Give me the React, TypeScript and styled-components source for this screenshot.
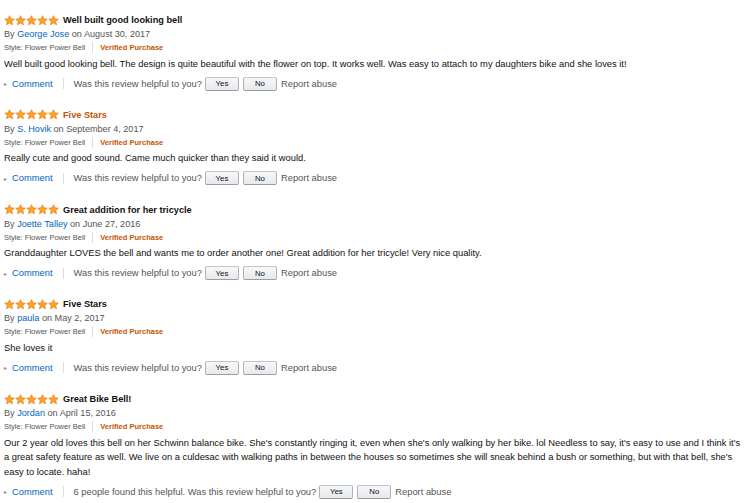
import React from "react";
import styled, { createGlobalStyle } from "styled-components";

const Global = createGlobalStyle`
  html, body { margin: 0; padding: 0; background: #fff; }
  body { font-family: "Liberation Sans", Arial, sans-serif; color: #111; }
`;

const Page = styled.div`
  padding: 13px 6px 0 4px;
  width: 750px;
  box-sizing: border-box;
`;

const Review = styled.div`
  display: flex;
  flex-direction: column;
  margin-bottom: 16.25px;
`;

const TitleRow = styled.div`
  display: flex;
  align-items: center;
  height: 14px;
  gap: 4px;
`;

const Stars = styled.div`
  display: flex;
  width: 55px;
`;

const Title = styled.span<{ $orange?: boolean }>`
  font-size: 9.2px;
  font-weight: bold;
  color: ${(p) => (p.$orange ? "#c45500" : "#111")};
`;

const ByLine = styled.div`
  font-size: 9.1px;
  line-height: 14px;
  height: 14px;
  color: #555;
`;

const Link = styled.span`
  color: #0066c0;
`;

const StyleLine = styled.div`
  display: flex;
  align-items: center;
  height: 13px;
  font-size: 7.5px;
  color: #555;
`;

const Sep = styled.span<{ $gap?: number }>`
  display: inline-block;
  width: 1px;
  height: 11px;
  background: #ddd;
  margin: 0 ${(p) => p.$gap ?? 7}px;
`;

const Verified = styled.span`
  color: #c45500;
  font-weight: bold;
`;

const Body = styled.div`
  margin-top: 2.5px;
  font-size: 9.35px;
  line-height: 14.5px;
  color: #111;
`;

const Actions = styled.div`
  margin-top: 4.5px;
  display: flex;
  align-items: center;
  height: 16px;
  font-size: 9.35px;
  color: #555;
`;

const Caret = styled.span`
  font-size: 6px;
  color: #888;
  margin-right: 5px;
`;

const Btn = styled.button`
  font-family: inherit;
  font-size: 7.8px;
  color: #111;
  height: 14px;
  width: 34px;
  padding: 0;
  margin-left: 3px;
  border: 1px solid #adb1b8;
  border-top-color: #c2c5ca;
  border-bottom-color: #9a9da2;
  border-radius: 2px;
  background: linear-gradient(#f7f8fa, #e7e9ec);
  & + & {
    margin-left: 4px;
  }
`;

const Report = styled.span`
  margin-left: 4px;
  color: #555;
`;

const Star = () => (
  <svg width="11" height="11" viewBox="0 0 24 24">
    <path
      d="M12 1.5l3.1 6.9 7.4.7-5.6 5 1.7 7.4L12 17.6l-6.6 3.9 1.7-7.4-5.6-5 7.4-.7z"
      fill="#ffa41c"
      stroke="#de7921"
      strokeWidth="1.4"
      strokeLinejoin="round"
    />
  </svg>
);

type R = {
  title: string;
  orange?: boolean;
  author: string;
  date: string;
  body: string;
  helpful?: string;
};

const reviews: R[] = [
  {
    title: "Well built good looking bell",
    author: "George Jose",
    date: "August 30, 2017",
    body: "Well built good looking bell. The design is quite beautiful with the flower on top. It works well. Was easy to attach to my daughters bike and she loves it!",
  },
  {
    title: "Five Stars",
    orange: true,
    author: "S. Hovik",
    date: "September 4, 2017",
    body: "Really cute and good sound. Came much quicker than they said it would.",
  },
  {
    title: "Great addition for her tricycle",
    author: "Joette Talley",
    date: "June 27, 2016",
    body: "Granddaughter LOVES the bell and wants me to order another one! Great addition for her tricycle! Very nice quality.",
  },
  {
    title: "Five Stars",
    author: "paula",
    date: "May 2, 2017",
    body: "She loves it",
  },
  {
    title: "Great Bike Bell!",
    author: "Jordan",
    date: "April 15, 2016",
    body: "Our 2 year old loves this bell on her Schwinn balance bike. She's constantly ringing it, even when she's only walking by her bike. lol Needless to say, it's easy to use and I think it's a great safety feature as well. We live on a culdesac with walking paths in between the houses so sometimes she will sneak behind a bush or something, but with that bell, she's easy to locate. haha!",
    helpful: "6 people found this helpful. ",
  },
];

export default function App() {
  return (
    <Page>
      <Global />
      {reviews.map((r, i) => (
        <Review key={i}>
          <TitleRow>
            <Stars>
              {[0, 1, 2, 3, 4].map((k) => (
                <Star key={k} />
              ))}
            </Stars>
            <Title $orange={r.orange}>{r.title}</Title>
          </TitleRow>
          <ByLine>
            By <Link>{r.author}</Link> on {r.date}
          </ByLine>
          <StyleLine>
            Style: Flower Power Bell
            <Sep />
            <Verified>Verified Purchase</Verified>
          </StyleLine>
          <Body>{r.body}</Body>
          <Actions>
            <Caret>▸</Caret>
            <Link>Comment</Link>
            <Sep $gap={10} />
            {r.helpful ?? ""}Was this review helpful to you?
            <Btn>Yes</Btn>
            <Btn>No</Btn>
            <Report>Report abuse</Report>
          </Actions>
        </Review>
      ))}
    </Page>
  );
}
